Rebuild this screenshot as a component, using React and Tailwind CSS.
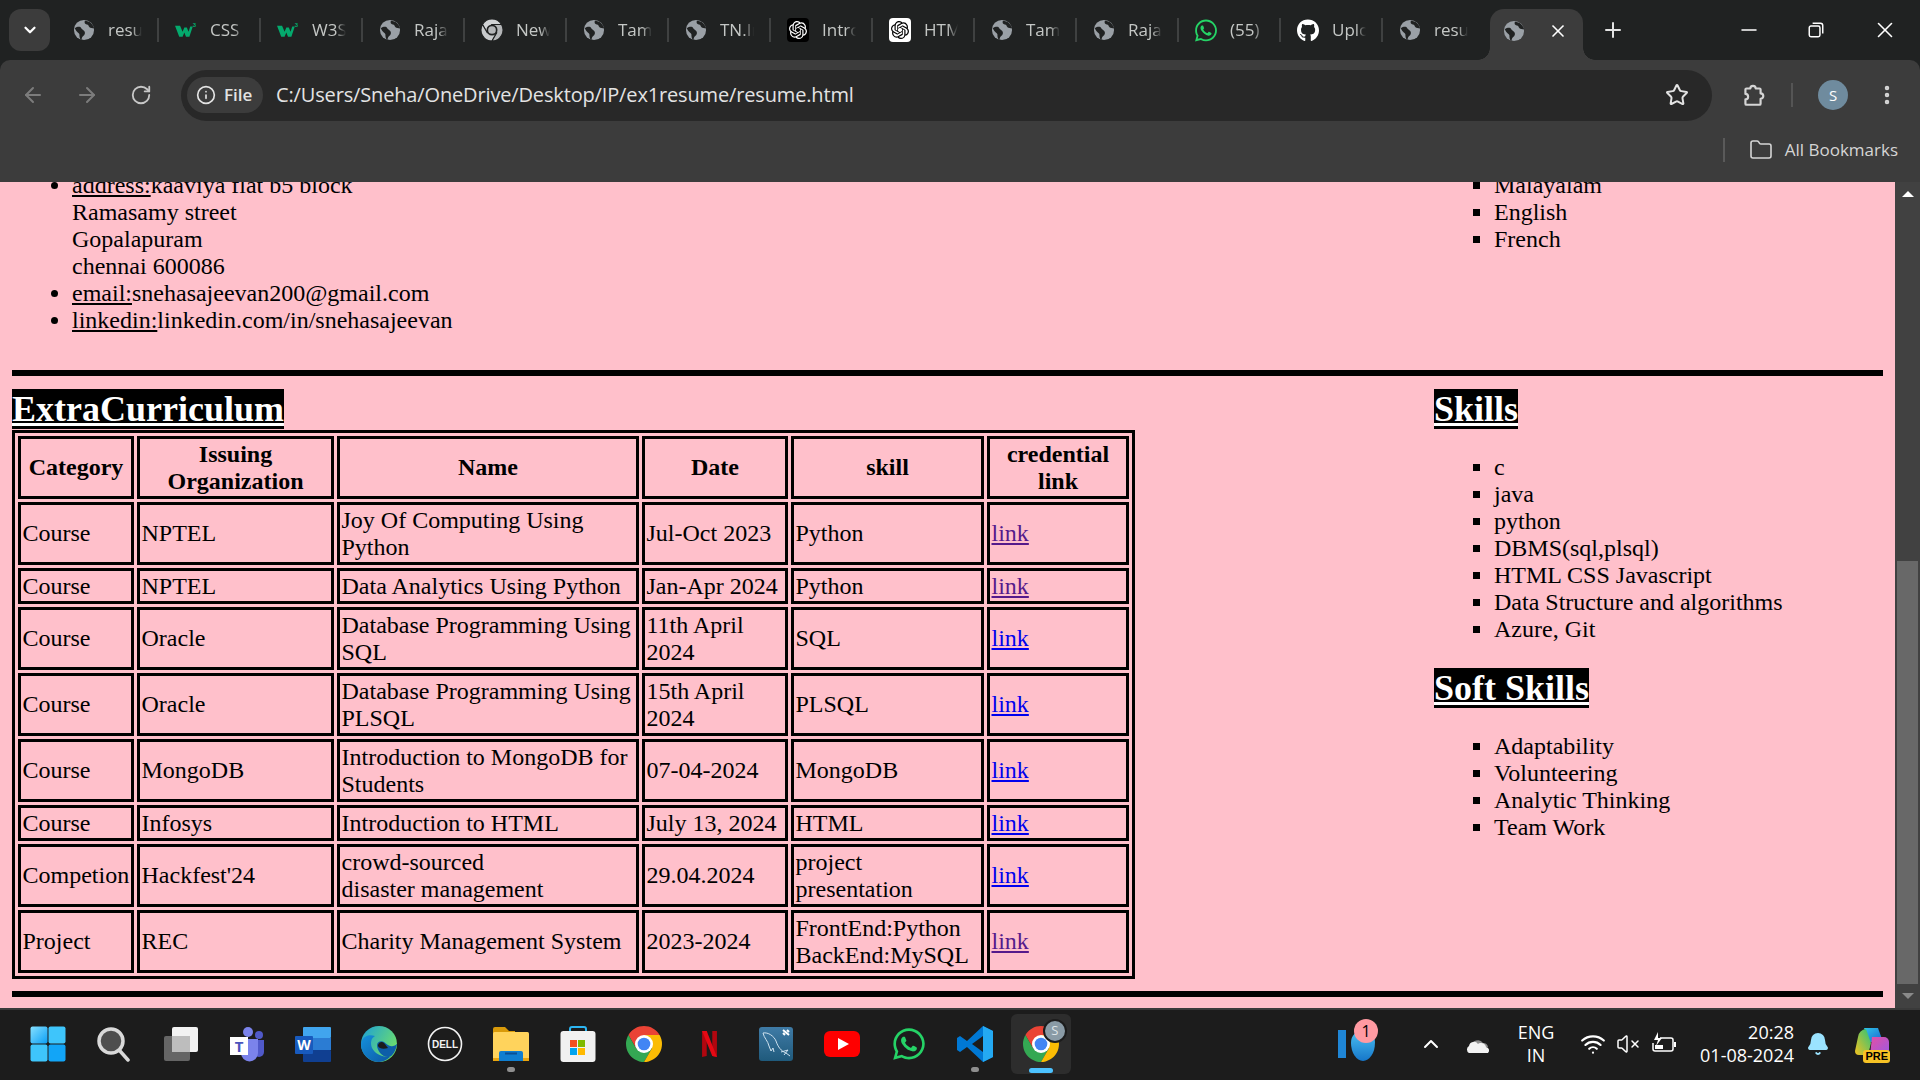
import { ArrowLeft, ArrowRight, RotateCw, Info, Star, EllipsisVertical, Folder, ChevronDown, ChevronUp, X, Plus, Minus, Wifi, VolumeX, Bell } from "lucide-react"
import { FaWhatsapp, FaGithub } from "react-icons/fa"
import { SiOpenai } from "react-icons/si"

const Globe = () => (
  <svg viewBox="0 0 24 24" className="w-[22px] h-[22px]">
    <circle cx="12" cy="12" r="11" fill="#9aa0a6" />
    <path d="M2 10c3-2 6-2 7 0s4 2 4 5-2 3-3 5l-1 3c-2-2-2-4-2-6s-3-2-5-7z" fill="#202222" />
    <path d="M13 2c-1 2 0 4 2 4s2 2 3 3 3 1 5 1c-1-4-5-8-10-8z" fill="#202222" />
  </svg>
)

const W3 = () => (
  <svg viewBox="0 0 26 20" className="w-[25px] h-[20px]">
    <polygon points="0,5 6,5 9,12 11,7 14,7 16,12 18,6 21,6 17,18 13,18 11,13 9,18 5,18" fill="#04aa6d" />
    <text x="21" y="6" fontSize="7" fontWeight="700" fill="#04aa6d" fontFamily="'Liberation Sans',sans-serif">3</text>
  </svg>
)

const ChromeLogo = ({ size = 36, red = "#ea4335", green = "#34a853", yellow = "#fbbc04", ring = "#ffffff", core = "#4285f4", gap }) => (
  <svg viewBox="4 4 40 40" style={{ width: size, height: size }}>
    <path d="M6.68 14A20 20 0 0 1 41.32 14H24L15.34 29Z" fill={red} stroke={gap} strokeWidth={gap ? 2 : 0} />
    <path d="M6.68 14A20 20 0 0 0 24 44L32.66 29H15.34Z" fill={green} stroke={gap} strokeWidth={gap ? 2 : 0} />
    <path d="M41.32 14A20 20 0 0 1 24 44L32.66 29L24 14Z" fill={yellow} stroke={gap} strokeWidth={gap ? 2 : 0} />
    <circle cx="24" cy="24" r="10" fill={ring} />
    <circle cx="24" cy="24" r="7" fill={core} />
  </svg>
)

const GptIcon = ({ dark }) => (
  <div className={`w-[22px] h-[24px] flex items-center justify-center rounded-sm ${dark ? "bg-black" : "bg-white"}`}>
    <SiOpenai className={`w-[18px] h-[18px] ${dark ? "text-white" : "text-black"}`} />
  </div>
)

const tabs = [
  { icon: <Globe />, title: "resume" },
  { icon: <W3 />, title: "CSS Tutorial" },
  { icon: <W3 />, title: "W3Schools" },
  { icon: <Globe />, title: "Rajalakshmi" },
  { icon: <ChromeLogo size={22} red="#d0d2d4" green="#c8cacc" yellow="#b4b6b8" ring="#202222" core="#b4b6b8" gap="#202222" />, title: "New Tab" },
  { icon: <Globe />, title: "Tamil" },
  { icon: <Globe />, title: "TN.Info" },
  { icon: <GptIcon dark />, title: "Intro" },
  { icon: <GptIcon />, title: "HTML" },
  { icon: <Globe />, title: "Tamil" },
  { icon: <Globe />, title: "Rajalakshmi" },
  { icon: <FaWhatsapp className="w-[25px] h-[25px] text-[#25d366]" />, title: "(55)" },
  { icon: <FaGithub className="w-[25px] h-[25px] text-white" />, title: "Upload" },
  { icon: <Globe />, title: "resume", last: true },
]

const TabBar = () => (
  <div className="h-[60px] flex items-center bg-[#202222] pl-[9px] font-['Open_Sans',sans-serif]">
    <div className="w-[41px] h-[42px] rounded-xl bg-[#3c3c3c] flex items-center justify-center mr-[7px]">
      <ChevronDown className="w-[18px] h-[18px] text-white" strokeWidth={3} />
    </div>
    {tabs.map((t, i) => (
      <div key={i} className="w-[102px] h-[60px] flex items-center pl-[16px]">
        <div className="w-[22px] flex justify-center">{t.icon}</div>
        <div className="w-[34px] ml-[13px] overflow-hidden whitespace-nowrap text-[17px] text-[#c4c7c5] [mask-image:linear-gradient(to_right,black_70%,transparent)]">{t.title}</div>
        {!t.last && <div className="ml-auto w-[2px] h-[24px] bg-[#3f4141]"></div>}
      </div>
    ))}
    <div className="relative ml-[5px] self-end w-[93px] h-[51px] bg-[#3c3c3c] rounded-t-[14px] flex items-center pl-[13px] pb-[8px]">
      <div className="absolute bottom-0 -left-[12px] w-[12px] h-[12px] bg-[radial-gradient(circle_at_0_0,transparent_11.5px,#3c3c3c_12px)]"></div>
      <div className="absolute bottom-0 -right-[12px] w-[12px] h-[12px] bg-[radial-gradient(circle_at_100%_0,transparent_11.5px,#3c3c3c_12px)]"></div>
      <Globe />
      <X className="ml-[23px] w-[20px] h-[20px] text-white" strokeWidth={2} />
    </div>
    <Plus className="ml-[18px] w-[24px] h-[24px] text-[#e3e3e3]" strokeWidth={2} />
    <Minus className="ml-[112px] w-[24px] h-[24px] text-white" strokeWidth={1.5} />
    <svg viewBox="0 0 16 16" className="ml-[46px] w-[18px] h-[18px] text-white" fill="none" stroke="currentColor" strokeWidth="1.3">
      <rect x="2" y="4.5" width="9.5" height="9.5" rx="1.5" />
      <path d="M5 2h7a2 2 0 0 1 2 2v7" />
    </svg>
    <X className="ml-[47px] w-[26px] h-[26px] text-white" strokeWidth={1.5} />
  </div>
)

const ExtensionIcon = () => (
  <svg viewBox="0 0 24 24" className="ml-[28px] w-[26px] h-[26px] text-[#d5d5d5]" fill="none" stroke="currentColor" strokeWidth="2" strokeLinejoin="round">
    <path d="M6 6h3.5a2.5 2.5 0 0 1 5 0H18a1 1 0 0 1 1 1v3.5a2.5 2.5 0 0 1 0 5V20a1 1 0 0 1-1 1H6a1 1 0 0 1-1-1v-4a2.5 2.5 0 0 0 0-5V7a1 1 0 0 1 1-1z" />
  </svg>
)

const Toolbar = () => (
  <div className="h-[122px] bg-[#3c3c3c] rounded-t-[10px] font-['Open_Sans',sans-serif]">
    <div className="h-[70px] flex items-center pl-[6px]">
      <div className="w-[54px] flex justify-center"><ArrowLeft className="w-[24px] h-[24px] text-[#7c7c7c]" strokeWidth={2} /></div>
      <div className="w-[54px] flex justify-center"><ArrowRight className="w-[24px] h-[24px] text-[#7c7c7c]" strokeWidth={2} /></div>
      <div className="w-[54px] flex justify-center"><RotateCw className="w-[22px] h-[22px] text-[#c7c7c7]" strokeWidth={2} /></div>
      <div className="ml-[13px] w-[1531px] h-[51px] rounded-full bg-[#282828] flex items-center pl-[6px]">
        <div className="w-[76px] h-[36px] rounded-full bg-[#3c3c3c] flex items-center pl-[9px]">
          <Info className="w-[20px] h-[20px] text-[#e3e3e3]" strokeWidth={2} />
          <span className="ml-[8px] text-[17px] font-semibold text-[#e3e3e3]">File</span>
        </div>
        <span className="ml-[13px] text-[20px] text-[#e3e3e3] tracking-[-0.15px]">C:/Users/Sneha/OneDrive/Desktop/IP/ex1resume/resume.html</span>
        <Star className="ml-auto mr-[23px] w-[24px] h-[24px] text-[#e3e3e3]" strokeWidth={2} />
      </div>
      <ExtensionIcon />
      <div className="ml-[25px] w-[2px] h-[24px] bg-[#555555]"></div>
      <div className="ml-[25px] w-[30px] h-[30px] rounded-full bg-[#6f8b9e] flex items-center justify-center text-[15px] text-white">S</div>
      <EllipsisVertical className="ml-[27px] w-[24px] h-[24px] text-[#d5d5d5]" strokeWidth={2.5} />
    </div>
    <div className="h-[40px] flex items-center justify-end pr-[22px]">
      <div className="w-[2px] h-[24px] bg-[#5a5a5a]"></div>
      <Folder className="ml-[24px] w-[24px] h-[24px] text-[#d5d5d5]" strokeWidth={1.6} />
      <span className="ml-[12px] text-[17px] text-[#d5d5d5]">All Bookmarks</span>
    </div>
  </div>
)

const rows = [
  ["Course", "NPTEL", "Joy Of Computing Using Python", "Jul-Oct 2023", "Python", true],
  ["Course", "NPTEL", "Data Analytics Using Python", "Jan-Apr 2024", "Python", true],
  ["Course", "Oracle", "Database Programming Using SQL", "11th April 2024", "SQL", false],
  ["Course", "Oracle", "Database Programming Using PLSQL", "15th April 2024", "PLSQL", false],
  ["Course", "MongoDB", "Introduction to MongoDB for Students", "07-04-2024", "MongoDB", false],
  ["Course", "Infosys", "Introduction to HTML", "July 13, 2024", "HTML", false],
  ["Competion", "Hackfest'24", <>crowd-sourced<br />disaster management</>, "29.04.2024", "project presentation", false],
  ["Project", "REC", "Charity Management System", "2023-2024", <>FrontEnd:Python<br />BackEnd:MySQL</>, true],
]

const Heading = ({ children }) => (
  <h2 className="text-[36px] leading-[41px] font-bold">
    <span className="bg-black text-white underline">{children}</span>
  </h2>
)

const SquareList = ({ items }) => (
  <ul className="list-[square] pl-[60px]">
    {items.map((s) => <li key={s}>{s}</li>)}
  </ul>
)

const thClass = "border-[3px] border-black px-[1.5px] py-[1.5px] text-center font-bold"
const tdClass = "border-[3px] border-black px-[1.5px] py-[1.5px]"

const Page = () => (
  <div className="h-[826px] flex bg-[#ffc0cb] overflow-hidden">
    <div className="w-[1895px] pl-3 pr-3 text-black text-[24px] leading-[27px] font-['Liberation_Serif',serif]">
      <div className="flex -mt-[10px]">
        <ul className="w-[1422px] list-disc pl-[60px]">
          <li>
            <span className="underline">address:</span>kaaviya flat b5 block<br />
            Ramasamy street<br />
            Gopalapuram<br />
            chennai 600086
          </li>
          <li><span className="underline">email:</span>snehasajeevan200@gmail.com</li>
          <li><span className="underline">linkedin:</span>linkedin.com/in/snehasajeevan</li>
        </ul>
        <SquareList items={["Malayalam", "English", "French"]} />
      </div>
      <div className="mt-[36px] h-[6px] bg-black"></div>
      <div className="flex mt-[13px]">
        <div className="w-[1422px]">
          <Heading>ExtraCurriculum</Heading>
          <table className="table-fixed w-[1123px] border-separate border-spacing-[3px] border-[3px] border-black">
            <colgroup>
              <col className="w-[116px]" />
              <col className="w-[197px]" />
              <col className="w-[302px]" />
              <col className="w-[146px]" />
              <col className="w-[193px]" />
              <col className="w-[142px]" />
            </colgroup>
            <thead>
              <tr>
                <th className={thClass}>Category</th>
                <th className={thClass}>Issuing Organization</th>
                <th className={thClass}>Name</th>
                <th className={thClass}>Date</th>
                <th className={thClass}>skill</th>
                <th className={thClass}>credential link</th>
              </tr>
            </thead>
            <tbody>
              {rows.map((r, i) => (
                <tr key={i}>
                  <td className={`${tdClass} whitespace-nowrap`}>{r[0]}</td>
                  <td className={tdClass}>{r[1]}</td>
                  <td className={tdClass}>{r[2]}</td>
                  <td className={tdClass}>{r[3]}</td>
                  <td className={tdClass}>{r[4]}</td>
                  <td className={tdClass}>
                    <a href="#" className={`underline ${r[5] ? "text-[#551a8b]" : "text-[#0000ee]"}`}>link</a>
                  </td>
                </tr>
              ))}
            </tbody>
          </table>
        </div>
        <div className="flex-1">
          <Heading>Skills</Heading>
          <div className="mt-[24px] mb-[25px]">
            <SquareList items={["c", "java", "python", "DBMS(sql,plsql)", "HTML CSS Javascript", "Data Structure and algorithms", "Azure, Git"]} />
          </div>
          <Heading>Soft Skills</Heading>
          <div className="mt-[24px]">
            <SquareList items={["Adaptability", "Volunteering", "Analytic Thinking", "Team Work"]} />
          </div>
        </div>
      </div>
      <div className="mt-[12px] h-[6px] bg-black"></div>
    </div>
    <div className="w-[25px] bg-[#414141] flex flex-col items-center">
      <div className="mt-[9px] w-0 h-0 border-x-[6px] border-x-transparent border-b-[6px] border-b-white"></div>
      <div className="mt-[364px] w-[21px] h-[423px] bg-[#686868]"></div>
      <div className="mt-[9px] w-0 h-0 border-x-[6px] border-x-transparent border-t-[6px] border-t-[#8a8a8a]"></div>
    </div>
  </div>
)

const WinLogo = () => (
  <svg viewBox="0 0 36 36" className="w-[36px] h-[36px]">
    <defs>
      <linearGradient id="winA" x1="0" y1="0" x2="1" y2="1">
        <stop offset="0" stopColor="#86e0ff" />
        <stop offset="1" stopColor="#0b9ff5" />
      </linearGradient>
    </defs>
    <rect x="0.5" y="0.5" width="17" height="17" rx="2" fill="url(#winA)" />
    <rect x="18.5" y="0.5" width="17" height="17" rx="2" fill="#3ec5fb" />
    <rect x="0.5" y="18.5" width="17" height="17" rx="2" fill="#3ec5fb" />
    <rect x="18.5" y="18.5" width="17" height="17" rx="2" fill="#12a5f7" />
  </svg>
)

const SearchIcon = () => (
  <svg viewBox="0 0 36 36" className="w-[36px] h-[36px]">
    <circle cx="15" cy="15" r="12" fill="#4e4e4e" stroke="#d9d9d9" strokeWidth="3.5" />
    <line x1="24" y1="25" x2="32" y2="34" stroke="#d9d9d9" strokeWidth="3.5" strokeLinecap="round" />
  </svg>
)

const TaskView = () => (
  <svg viewBox="0 0 36 36" className="w-[36px] h-[36px]">
    <rect x="2" y="10" width="26" height="25" rx="2" fill="#656565" />
    <rect x="10" y="1" width="26" height="25" rx="2" fill="#f2f2f2" />
    <rect x="10" y="10" width="18" height="16" fill="#bdbdbd" />
  </svg>
)

const TeamsIcon = () => (
  <svg viewBox="0 0 36 36" className="w-[36px] h-[36px]">
    <circle cx="19" cy="6" r="5" fill="#7b83eb" />
    <circle cx="30" cy="9" r="4" fill="#5059c9" />
    <path d="M25 14h10v12a5 5 0 0 1-10 0z" fill="#5059c9" />
    <path d="M12 13h17v14a8.5 8.5 0 0 1-17 0z" fill="#7b83eb" />
    <rect x="1" y="11" width="18" height="18" fill="#ffffff" />
    <text x="10" y="25.5" textAnchor="middle" fontSize="15" fontWeight="700" fill="#4b53bc" fontFamily="'Open Sans',sans-serif">T</text>
  </svg>
)

const WordIcon = () => (
  <svg viewBox="0 0 36 36" className="w-[36px] h-[36px]">
    <rect x="8" y="1" width="28" height="11" rx="1" fill="#41a5ee" />
    <rect x="8" y="12" width="28" height="12" fill="#2b7cd3" />
    <rect x="8" y="24" width="28" height="12" rx="1" fill="#103f91" />
    <rect x="0" y="10" width="18" height="18" rx="1" fill="#185abd" />
    <text x="9" y="24" textAnchor="middle" fontSize="14" fontWeight="700" fill="#ffffff" fontFamily="'Open Sans',sans-serif">W</text>
  </svg>
)

const EdgeIcon = () => (
  <svg viewBox="0 0 36 36" className="w-[36px] h-[36px]">
    <defs>
      <linearGradient id="edgeA" x1="0" y1="0" x2="1" y2="0.6">
        <stop offset="0" stopColor="#1b9ed9" />
        <stop offset="1" stopColor="#6fe06a" />
      </linearGradient>
      <linearGradient id="edgeB" x1="0" y1="0" x2="1" y2="1">
        <stop offset="0" stopColor="#1590dc" />
        <stop offset="1" stopColor="#0c59a4" />
      </linearGradient>
    </defs>
    <circle cx="18" cy="18" r="18" fill="url(#edgeA)" />
    <path d="M18 36A18 18 0 0 1 0 18C1 10 8 8 14 10c-4 2-5 7-3 12 3 6 10 9 18 9a18 18 0 0 1-11 5z" fill="url(#edgeB)" />
    <path d="M16 19c0-3 4-5 7-3s5 5 9 4c4-1 3-2 4-2-1 6-4 12-8 13-6 1-12-6-12-12z" fill="#0d5ea8" />
    <path d="M17 19c1-3 4-4 6-2s3 4 4 5c-3 1-6 1-8 0s-2-2-2-3z" fill="#1c1c1c" />
  </svg>
)

const DellIcon = () => (
  <svg viewBox="0 0 36 36" className="w-[36px] h-[36px]">
    <circle cx="18" cy="18" r="16.5" fill="none" stroke="#f2f2f2" strokeWidth="1.6" />
    <text x="18" y="21.5" textAnchor="middle" fontSize="10" fontWeight="700" fill="#f2f2f2" fontFamily="'Liberation Sans',sans-serif">DELL</text>
  </svg>
)

const ExplorerIcon = () => (
  <svg viewBox="0 0 36 36" className="w-[36px] h-[36px]">
    <path d="M0 3a2 2 0 0 1 2-2h10l4 4h6v4H0z" fill="#d99a0a" />
    <rect x="0" y="6" width="36" height="29" rx="1.5" fill="#ffd35c" />
    <rect x="0" y="32" width="36" height="3" fill="#eaa50e" />
    <path d="M6 27a2 2 0 0 1 2-2h20a2 2 0 0 1 2 2v8H6z" fill="#0f7ed0" />
    <rect x="12" y="26.5" width="12" height="2" fill="#0a4f94" />
  </svg>
)

const StoreIcon = () => (
  <svg viewBox="0 0 36 36" className="w-[36px] h-[36px]">
    <path d="M10 7V3a2 2 0 0 1 2-2h12a2 2 0 0 1 2 2v4" fill="none" stroke="#2cb5f2" strokeWidth="2" />
    <rect x="0.5" y="5" width="35" height="31" rx="3" fill="#f1f1f1" />
    <rect x="10" y="14" width="7" height="7" fill="#f25022" />
    <rect x="18" y="14" width="7" height="7" fill="#7fba00" />
    <rect x="10" y="22" width="7" height="7" fill="#00a4ef" />
    <rect x="18" y="22" width="7" height="7" fill="#ffb900" />
  </svg>
)

const NetflixIcon = () => (
  <svg viewBox="0 0 16 28" className="w-[15px] h-[26px]">
    <polygon points="0,0 5,0 5,27 0,28" fill="#b1060f" />
    <polygon points="11,0 16,0 16,28 11,27" fill="#b1060f" />
    <polygon points="0,0 5,0 16,28 11,27" fill="#e50914" />
  </svg>
)

const MysqlIcon = () => (
  <div className="w-[34px] h-[34px] rounded-[3px] bg-gradient-to-b from-[#3f7ba6] to-[#1f5a7c]">
    <svg viewBox="0 0 34 34" className="w-[34px] h-[34px]" fill="none" stroke="#cfe2ef" strokeWidth="1" strokeLinejoin="round">
      <path d="M4 6C9 5 15 9 17 14C19 20 22 24 27 26L31 29" />
      <path d="M4 6C5 11 9 14 10 19L12 24L14 21L15 25" />
      <path d="M22 25L29 23L25 28" />
      <path d="M24 3L30 8M28 3L30 5M24 6L26 8" stroke="#ffffff" strokeWidth="2" />
    </svg>
  </div>
)

const YoutubeIcon = () => (
  <svg viewBox="0 0 36 26" className="w-[36px] h-[26px]">
    <rect width="36" height="26" rx="6" fill="#ff0000" />
    <polygon points="14,7 25,13 14,19" fill="#ffffff" />
  </svg>
)

const VscodeIcon = () => (
  <svg viewBox="0 0 36 36" className="w-[36px] h-[36px]">
    <path d="M26 0l10 5v26l-10 5-16-15-7 5-3-2v-12l3-2 7 5z" fill="#0078d4" />
    <path d="M26 0l10 5v26l-10 5z" fill="#24a9f2" />
    <path d="M26 10L15 18l11 8z" fill="#1c1c1c" />
  </svg>
)

const CopilotIcon = () => (
  <div className="relative w-[36px] h-[38px]">
    <svg viewBox="0 0 36 36" className="w-[36px] h-[36px]">
      <defs>
        <linearGradient id="copA" x1="0" y1="0" x2="1" y2="1">
          <stop offset="0" stopColor="#2cc5e8" />
          <stop offset="1" stopColor="#1f5fd0" />
        </linearGradient>
        <linearGradient id="copB" x1="0" y1="1" x2="1" y2="0">
          <stop offset="0" stopColor="#f4c21f" />
          <stop offset="1" stopColor="#28c37a" />
        </linearGradient>
        <linearGradient id="copC" x1="0" y1="0" x2="1" y2="1">
          <stop offset="0" stopColor="#e54fa2" />
          <stop offset="1" stopColor="#9a5ae5" />
        </linearGradient>
      </defs>
      <path d="M10 3h14l5 14H15z" fill="url(#copA)" />
      <path d="M4 12a9 9 0 0 1 8-8l5 14-3 12H5a4 4 0 0 1-4-4z" fill="url(#copB)" />
      <path d="M18 12h12a5 5 0 0 1 5 5v8a5 5 0 0 1-5 5H16z" fill="url(#copC)" />
    </svg>
    <span className="absolute right-0 bottom-0 px-[2px] rounded-[3px] bg-[#f7c325] text-[11px] leading-[13px] font-bold text-black font-['Liberation_Sans',sans-serif]">PRE</span>
  </div>
)

const WidgetIcon = () => (
  <div className="relative w-[38px] h-[38px] flex items-start pt-[7px]">
    <div className="w-[8px] h-[28px] bg-[#1f86d6]"></div>
    <div className="ml-[5px] w-[24px] h-[31px] rounded-[50%_50%_50%_50%/40%_40%_60%_60%] bg-gradient-to-b from-[#4cc3f2] to-[#1676c9]"></div>
    <div className="absolute -top-[4px] -right-[2px] w-[24px] h-[24px] rounded-full bg-[#ff9aa2] flex items-center justify-center text-[16px] text-black">1</div>
  </div>
)

const CloudIcon = () => (
  <svg viewBox="0 0 26 18" className="w-[26px] h-[18px]">
    <path d="M6 12a6 6 0 0 1 11-4 5 5 0 0 1 5 4z" fill="#8f8f8f" />
    <path d="M3 18a4 4 0 0 1 0-7 5 5 0 0 1 9-2 5 5 0 0 1 8 3 3.5 3.5 0 0 1 2 6z" fill="#f2f2f2" />
  </svg>
)

const BatteryIcon = () => (
  <svg viewBox="0 0 26 26" className="ml-[11px] w-[26px] h-[26px]" fill="none" stroke="#ffffff" strokeWidth="1.5">
    <path d="M9 7h11a2 2 0 0 1 2 2v9a2 2 0 0 1-2 2H4a2 2 0 0 1-2-2v-6" />
    <path d="M24 11v5" strokeWidth="2" />
    <path d="M7 1L3 9h4l-2 6 6-8H7z" fill="#ffffff" stroke="none" />
    <rect x="4" y="14" width="8" height="4" fill="#ffffff" stroke="none" />
  </svg>
)

const TaskItem = ({ children, dot, active }) => (
  <div className={`relative shrink-0 h-[60px] flex items-center justify-center rounded-md ${active ? "w-[60px] mx-[3.1px] bg-[#2d2d2d]" : "w-[66.2px]"}`}>
    {children}
    {dot && <div className="absolute bottom-[2px] w-[8px] h-[5px] rounded-full bg-[#8f8f8f]"></div>}
    {active && <div className="absolute bottom-[1px] w-[24px] h-[5px] rounded-full bg-[#4cc2ff]"></div>}
  </div>
)

const Taskbar = () => (
  <div className="h-[72px] bg-[#1c1c1c] border-t-2 border-[#3a3a3a] flex items-start pt-[4px] pl-[15px] font-['Open_Sans',sans-serif] text-white">
    <TaskItem><WinLogo /></TaskItem>
    <TaskItem><SearchIcon /></TaskItem>
    <TaskItem><TaskView /></TaskItem>
    <TaskItem><TeamsIcon /></TaskItem>
    <TaskItem><WordIcon /></TaskItem>
    <TaskItem><EdgeIcon /></TaskItem>
    <TaskItem><DellIcon /></TaskItem>
    <TaskItem dot><ExplorerIcon /></TaskItem>
    <TaskItem><StoreIcon /></TaskItem>
    <TaskItem><ChromeLogo /></TaskItem>
    <TaskItem><NetflixIcon /></TaskItem>
    <TaskItem><MysqlIcon /></TaskItem>
    <TaskItem><YoutubeIcon /></TaskItem>
    <TaskItem><FaWhatsapp className="w-[36px] h-[36px] text-[#25d366]" /></TaskItem>
    <TaskItem dot><VscodeIcon /></TaskItem>
    <TaskItem active>
      <ChromeLogo />
      <div className="absolute top-[5px] right-[4px] w-[24px] h-[24px] rounded-full bg-[#8a9ba6] border-2 border-[#1c1c1c] flex items-center justify-center text-[13px] text-[#dfe5e9]">S</div>
    </TaskItem>
    <div className="ml-[264px] mt-[9px] shrink-0"><WidgetIcon /></div>
    <div className="flex items-center h-[60px] text-[18px] leading-[23px] shrink-0">
      <ChevronUp className="ml-[43px] w-[24px] h-[24px] text-white" strokeWidth={2} />
      <div className="ml-[23px]"><CloudIcon /></div>
      <div className="ml-[8px] w-[72px] text-center">ENG<br />IN</div>
      <Wifi className="ml-[8px] w-[26px] h-[26px]" strokeWidth={2} />
      <VolumeX className="ml-[10px] w-[24px] h-[24px]" strokeWidth={1.5} />
      <BatteryIcon />
      <div className="ml-[10px] w-[107px] text-right">20:28<br />01-08-2024</div>
      <Bell className="ml-[12px] w-[24px] h-[24px] text-[#9be3ff] fill-[#9be3ff]" />
      <div className="ml-[24px]"><CopilotIcon /></div>
    </div>
  </div>
)

const App = () => (
  <div className="w-[1920px] h-[1080px] overflow-hidden bg-[#202222]">
    <TabBar />
    <Toolbar />
    <Page />
    <Taskbar />
  </div>
)

export default App
